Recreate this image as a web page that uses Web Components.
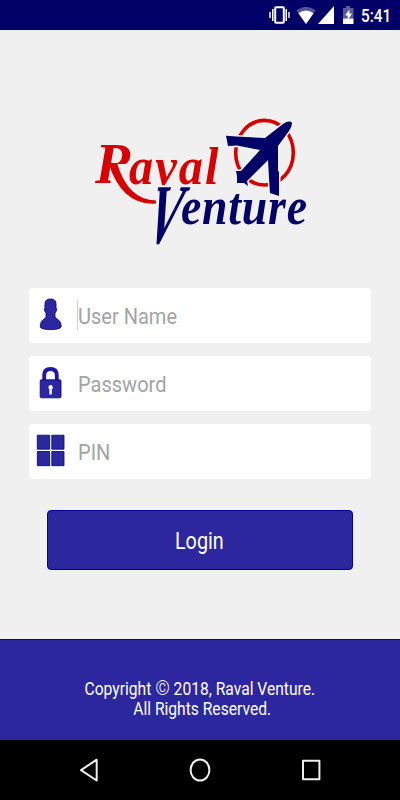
<!DOCTYPE html>
<html lang="en">
<head>
<meta charset="utf-8">
<title>Raval Venture</title>
<style>
html,body{margin:0;height:100%;background:#f0f0f0;font-family:Roboto,"Liberation Sans",sans-serif}
</style>
</head>
<body>
<login-screen></login-screen>
<script>
const define = (name, markup) => {
  const t = document.createElement('template');
  t.innerHTML = markup;
  customElements.define(name, class extends HTMLElement {
    constructor() {
      super();
      this.attachShadow({mode:'open'}).append(t.content.cloneNode(true));
    }
  });
};

// Text condensed horizontally around its origin.
define('narrow-text', `
<style>:host{display:block;white-space:nowrap;transform:scaleX(var(--sx,.89));transform-origin:var(--o,left) center}</style><slot></slot>`);

define('status-bar', `
<style>
:host{display:flex;height:30px;background:#000066;color:#fff;justify-content:flex-end;align-items:center}
svg{width:92px;height:30px;flex:none}
narrow-text{width:30px;margin-right:9px;font-size:18px;font-weight:500;line-height:30px;padding-top:2px;--sx:.85}
</style>
<svg viewBox="268 0 92 30" fill="#fff">
 <rect x="274.2" y="7.2" width="8.6" height="15.6" rx=".8" fill="none" stroke="#fff" stroke-width="2"/>
 <path d="M271 9h1.5v12H271zM268.300 12h1.400v6h-1.400zM284.500 9h1.500v12h-1.500zM287.300 12h1.400v6h-1.400z"/>
 <path d="M295.300 10.300Q305 3 314.700 10.300L305 24Z" opacity=".32"/>
 <path d="M297.400 13.200Q305 8 312.600 13.200L305 24Z"/>
 <path d="M333 6v18h-16z"/>
 <path d="M345 6h4v2h3.500v10.500H342V8h3z" opacity=".35"/>
 <path d="M342 18.500h10.500V24H342z"/>
 <path d="M348.300 9.500l-4.100 6h2.500v4.500l4.300-6.500h-2.700z"/>
</svg>
<narrow-text>5:41</narrow-text>`);

define('brand-logo', `
<style>:host{display:block;width:220px;height:135px}svg{display:block;overflow:visible}text{font-family:"Liberation Serif",serif;font-style:italic;font-weight:700}</style>
<svg width="220" height="135" viewBox="90 113 220 135">
 <clipPath id="bowl"><path d="M88 140H136V164H114L109 190H88Z"/></clipPath>
 <g fill="#d60000">
  <g clip-path="url(#bowl)"><text transform="translate(95 182.500) scale(1 1)" font-size="57">R</text></g>
  <text transform="translate(129 184) scale(.93 1)" font-size="52" letter-spacing="2.200">aval</text>
  <path d="M108.500 163L117 163Q128 200 156 200.500V203.500Q122 206 108.500 163Z"/>
 </g>
 <g fill="#000066">
  <text transform="translate(144.500 242.500) skewX(-11) scale(.56 1)" font-size="85">V</text>
  <text transform="translate(181 224) scale(.88 1)" font-size="52" letter-spacing=".9">enture</text>
 </g>
 <ellipse cx="264.500" cy="152.700" rx="28.800" ry="32.300" fill="none" stroke="#d60000" stroke-width="3.600"/>
 <path d="M226 135.800L236 136.500L265 138L283 124Q288 120.500 291.500 122Q293 125 289 131L278 146V171L279 172V196L270 193L269 178L268 160L247 181L248 186L244 183L237 183V176L236 171L241 171L260 150L237 145.500L228 146Z" fill="#000066" stroke="#f0f0f0" stroke-width="3" paint-order="stroke"/>
</svg>`);

define('input-row', `
<style>
:host{display:flex;align-items:center;height:55.500px;box-sizing:border-box;background:#fff;border-radius:4px;color:#a3a3a3;font-size:22.500px}
.icon{width:49px;height:56px;flex:none}
.field{display:flex;align-items:center;height:30px}
narrow-text{line-height:30px;padding-top:1px}
:host([focused]) .field{box-shadow:-1px 0 #d0d0d0}
::slotted(svg){display:block;width:49px;height:56px}
</style>
<div class="icon"><slot name="icon"></slot></div><div class="field"><narrow-text><slot></slot></narrow-text></div>`);

define('login-button', `
<style>:host{display:flex;align-items:center;justify-content:center;height:60px;box-sizing:border-box;border:1px solid #000099;border-radius:4px;background:#2c279e;color:#fff;font-size:23px}narrow-text{padding-top:3px;--sx:.86;--o:center}</style>
<narrow-text><slot></slot></narrow-text>`);

define('page-footer', `
<style>:host{display:flex;flex-direction:column;align-items:center;box-sizing:border-box;height:101px;border-top:1px solid #000099;padding-top:38.500px;background:#2c279e;color:#fff;font-size:18px;line-height:20.500px}</style>
<slot></slot>`);

define('nav-bar', `
<style>:host{display:block;height:60px;background:#000}svg{display:block}</style>
<svg width="400" height="60" viewBox="0 740 400 60" fill="none" stroke="#eee" stroke-width="2" stroke-linejoin="round">
 <path d="M96.700 759.700v20.800L81 770.100z"/><ellipse cx="200" cy="770" rx="9.400" ry="10.600"/><rect x="303" y="760.700" width="16.400" height="18.600"/>
</svg>`);

define('login-screen', `
<style>
:host{display:flex;flex-direction:column;height:800px;width:400px;overflow:hidden;background:#f0f0f0}
main{flex:1;display:flex;flex-direction:column;padding:83px 29px 0}
brand-logo{margin-left:61px;flex:none}
.fields{display:grid;gap:12.500px;margin:39.500px 0 31px}
login-button{margin:0 18px 0 17.500px}
narrow-text{--o:center;--sx:.868}
narrow-text.rights{padding-left:4px}
.c{display:inline-block;font-size:21px;font-weight:300;line-height:1px}
</style>
<status-bar></status-bar>
<main>
 <brand-logo></brand-logo>
 <div class="fields">
  <input-row focused>
   <svg slot="icon" viewBox="29 287.500 49 56" fill="#2c279e" stroke="#000080" stroke-width=".8"><path d="M50.500 299.500C55 299.500 56.500 301.500 56 308C57.300 309 56.500 312 55 313.500V317.500C57 320.500 61.200 320 61.200 327.500C60 331 41 331 40.300 327.500C40.300 320 44.300 320.500 46 317.500V313.500C44.500 312 43.700 309 45 308C44.500 301.500 46 299.500 50.500 299.500Z"/></svg>User Name</input-row>
  <input-row>
   <svg slot="icon" viewBox="29 355.500 49 56" fill="none"><path d="M44.200 381V376Q44.200 369.500 50.500 369.500T56.800 376V381" stroke="#2016a0" stroke-width="3.800"/><rect x="40.200" y="380.300" width="20.800" height="18" rx="1.200" fill="#2c279e" stroke="#000080" stroke-width=".8"/><path d="M50.600 385.500a2.200 2.500 0 0 0-1.200 4.600V395h2.400v-4.900a2.200 2.500 0 0 0-1.200-4.600z" fill="#fff"/></svg>Password</input-row>
  <input-row>
   <svg slot="icon" viewBox="29 423.500 49 56" fill="#2c279e" stroke="#000080" stroke-width=".8"><path d="M37.300 435.700h12.400v14H37.300zM51.800 435.700h12.200v14H51.800zM37.300 452h12.400v14.200H37.300zM51.800 452h12.200v14.200H51.800z"/></svg>PIN</input-row>
 </div>
 <login-button>Login</login-button>
</main>
<page-footer><narrow-text>Copyright <span class="c">©</span> 2018, Raval Venture.</narrow-text><narrow-text class="rights">All Rights Reserved.</narrow-text></page-footer>
<nav-bar></nav-bar>`);
</script>
</body>
</html>
